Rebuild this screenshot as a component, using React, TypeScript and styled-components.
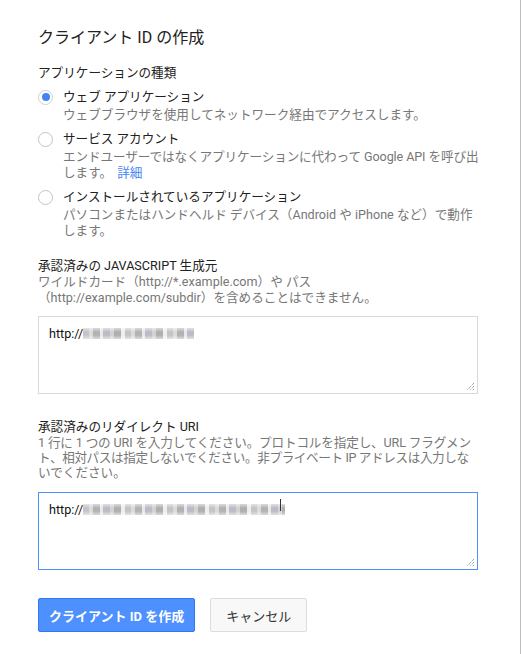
import React from "react";
import styled, { createGlobalStyle } from "styled-components";

const Global = createGlobalStyle`
  html, body { margin: 0; padding: 0; background: #fff; }
  body {
    font-family: Roboto, "Noto Sans CJK JP", "Liberation Sans", sans-serif;
    color: #212121;
    -webkit-font-smoothing: antialiased;
  }
`;

const Page = styled.div`
  box-sizing: border-box;
  width: 521px;
  min-height: 654px;
  border-right: 1px solid #bdbdbd;
  padding: 27px 0 0 38px;
`;

const Form = styled.div`
  width: 440px;
  display: flex;
  flex-direction: column;
`;

const Title = styled.h1`
  margin: 0;
  font-size: 16px;
  font-weight: 400;
  line-height: 22px;
  color: #212121;
`;

const SubHeading = styled.div`
  margin-top: 14.5px;
  font-size: 12.6px;
  line-height: 17px;
  color: #222;
`;

const RadioList = styled.div`
  margin-top: 6.5px;
  display: flex;
  flex-direction: column;
  gap: 6px;
`;

const RadioRow = styled.label`
  display: grid;
  grid-template-columns: 15px 1fr;
  column-gap: 10px;
  align-items: start;
`;

const RadioCircle = styled.span<{ $checked?: boolean }>`
  box-sizing: border-box;
  width: 15px;
  height: 15px;
  margin-top: 2.5px;
  border-radius: 50%;
  border: 1px solid ${(p) => (p.$checked ? "#d0d0d0" : "#c4c4c4")};
  background: #fff;
  display: flex;
  align-items: center;
  justify-content: center;
  &::after {
    content: "";
    display: ${(p) => (p.$checked ? "block" : "none")};
    width: 8px;
    height: 8px;
    border-radius: 50%;
    background: #4285f4;
  }
`;

const RadioText = styled.div`
  display: flex;
  flex-direction: column;
`;

const RadioLabel = styled.span`
  font-size: 12.6px;
  line-height: 20px;
  color: #212121;
`;

const Help = styled.div<{ $lh?: number }>`
  font-size: 12.6px;
  line-height: ${(p) => p.$lh ?? 16}px;
  color: #777;
`;

const HelpLine = styled.span<{ $spacing?: number }>`
  display: block;
  white-space: nowrap;
  letter-spacing: ${(p) => p.$spacing ?? 0}px;
`;

const Link = styled.a`
  color: #4285f4;
  text-decoration: none;
  margin-left: 5px;
`;

const Section = styled.div<{ $top: number }>`
  margin-top: ${(p) => p.$top}px;
  display: flex;
  flex-direction: column;
`;

const FieldLabel = styled.div`
  font-size: 12.6px;
  line-height: 17px;
  color: #212121;
`;

const TextBox = styled.div<{ $focused?: boolean; $gap: number }>`
  position: relative;
  box-sizing: border-box;
  margin-top: ${(p) => p.$gap}px;
  width: 440px;
  height: 78px;
  border: 1px solid ${(p) => (p.$focused ? "#4d90fe" : "#d9d9d9")};
  padding: 8px 10px;
  font-size: 12.6px;
  line-height: 17px;
  color: #111;
  display: flex;
  align-items: flex-start;
`;

const Grip = styled.svg`
  position: absolute;
  right: 2px;
  bottom: 2px;
`;

const Blur = styled.span<{ $w: number }>`
  display: inline-block;
  width: ${(p) => p.$w}px;
  height: 11px;
  margin-top: 3px;
  background:
    linear-gradient(180deg, rgba(255,255,255,0.55), rgba(255,255,255,0) 35%, rgba(255,255,255,0) 65%, rgba(255,255,255,0.55)),
    repeating-linear-gradient(
      90deg,
      #c4c4c4 0 6px,
      #dadada 6px 10px,
      #b2b2b2 10px 17px,
      #e8e8e8 17px 20px,
      #bcbcc6 20px 27px,
      #d2d2d2 27px 31px,
      #afafaf 31px 38px,
      #eeeeee 38px 42px
    );
`;

const Caret = styled.span<{ $left: number }>`
  position: absolute;
  left: ${(p) => p.$left}px;
  top: 6px;
  width: 1px;
  height: 12px;
  background: #333;
`;

const Actions = styled.div`
  margin-top: 28px;
  display: flex;
  gap: 15px;
`;

const Button = styled.button<{ $primary?: boolean }>`
  box-sizing: border-box;
  height: 34px;
  padding: 0 ${(p) => (p.$primary ? "10px" : "15px")};
  border-radius: 2px;
  font-family: inherit;
  font-size: 13px;
  font-weight: ${(p) => (p.$primary ? 700 : 400)};
  border: 1px solid ${(p) => (p.$primary ? "#3079ed" : "#dcdcdc")};
  background: ${(p) => (p.$primary ? "#4d90fe" : "#f8f8f8")};
  color: ${(p) => (p.$primary ? "#fff" : "#333")};
  cursor: pointer;
`;

const ResizeGrip = () => (
  <Grip width="9" height="9" viewBox="0 0 9 9">
    <path d="M8 1 L1 8 M8 4 L4 8 M8 7 L7 8" stroke="#777" strokeWidth="1" strokeDasharray="1 1" />
  </Grip>
);

export default function App() {
  return (
    <>
      <Global />
      <Page>
        <Form>
          <Title>クライアント ID の作成</Title>
          <SubHeading>アプリケーションの種類</SubHeading>
          <RadioList>
            <RadioRow>
              <RadioCircle $checked />
              <RadioText>
                <RadioLabel>ウェブ アプリケーション</RadioLabel>
                <Help>ウェブブラウザを使用してネットワーク経由でアクセスします。</Help>
              </RadioText>
            </RadioRow>
            <RadioRow>
              <RadioCircle />
              <RadioText>
                <RadioLabel>サービス アカウント</RadioLabel>
                <Help>
                  <HelpLine $spacing={-0.1}>エンドユーザーではなくアプリケーションに代わって Google API を呼び出</HelpLine>
                  <HelpLine>
                    します。
                    <Link href="#">詳細</Link>
                  </HelpLine>
                </Help>
              </RadioText>
            </RadioRow>
            <RadioRow>
              <RadioCircle />
              <RadioText>
                <RadioLabel>インストールされているアプリケーション</RadioLabel>
                <Help>
                  <HelpLine>パソコンまたはハンドヘルド デバイス（Android や iPhone など）で動作</HelpLine>
                  <HelpLine>します。</HelpLine>
                </Help>
              </RadioText>
            </RadioRow>
          </RadioList>

          <Section $top={17.5}>
            <FieldLabel>承認済みの JAVASCRIPT 生成元</FieldLabel>
            <Help>
              <HelpLine>ワイルドカード（http://*.example.com）や パス</HelpLine>
              <HelpLine>（http://example.com/subdir）を含めることはできません。</HelpLine>
            </Help>
            <TextBox $gap={10.5}>
              http://
              <Blur $w={111} />
              <ResizeGrip />
            </TextBox>
          </Section>

          <Section $top={23.5}>
            <FieldLabel>承認済みのリダイレクト URI</FieldLabel>
            <Help $lh={15}>
              <HelpLine $spacing={-0.15}>1 行に 1 つの URI を入力してください。プロトコルを指定し、URL フラグメン</HelpLine>
              <HelpLine $spacing={-0.38}>ト、相対パスは指定しないでください。非プライベート IP アドレスは入力しな</HelpLine>
              <HelpLine>いでください。</HelpLine>
            </Help>
            <TextBox $focused $gap={12.5}>
              http://
              <Blur $w={202} />
              <Caret $left={241} />
              <ResizeGrip />
            </TextBox>
          </Section>

          <Actions>
            <Button $primary>クライアント ID を作成</Button>
            <Button>キャンセル</Button>
          </Actions>
        </Form>
      </Page>
    </>
  );
}
